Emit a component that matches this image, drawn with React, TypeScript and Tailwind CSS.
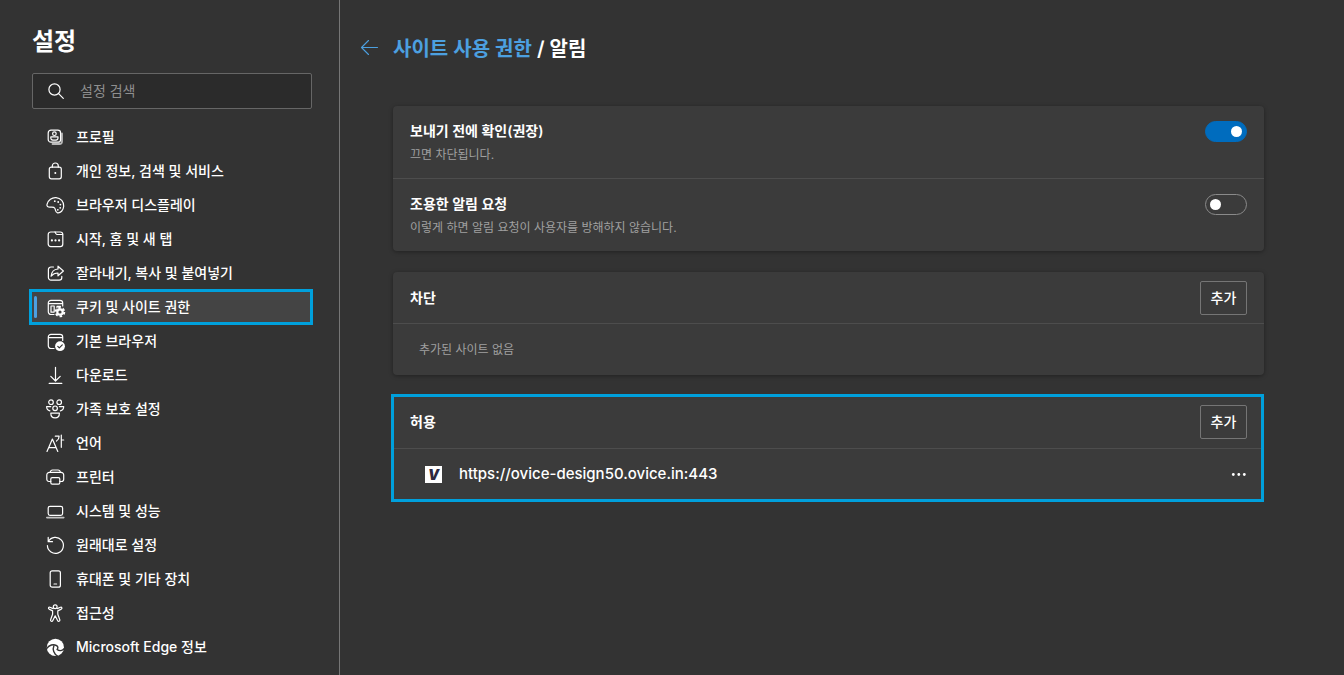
import React, { useState } from 'react';

interface NavItem {
  label: string;
  icon: React.ReactNode;
}

const menu: NavItem[] = [
  {
    label: '프로필',
    icon: (
      <>
        <path d="M17 6.5v8a2.5 2.5 0 0 1-2.5 2.5h-7" strokeWidth="1.8" opacity="0.65" />
        <rect x="3.2" y="3.2" width="12.4" height="12" rx="2.8" />
        <circle cx="9.4" cy="6.7" r="1.8" />
        <path d="M5.8 9.9h7.2v1c0 1.5-1.5 2.3-3.6 2.3s-3.6-.8-3.6-2.3z" />
      </>
    ),
  },
  {
    label: '개인 정보, 검색 및 서비스',
    icon: (
      <>
        <rect x="4.3" y="6.2" width="12" height="11.6" rx="2" />
        <path d="M7.3 6.2V5a3 3 0 0 1 6 0v1.2" />
        <circle cx="10.3" cy="12" r="1" fill="currentColor" stroke="none" />
      </>
    ),
  },
  {
    label: '브라우저 디스플레이',
    icon: (
      <>
        <path d="M2 9.3C3 5 7 2.3 11 2.6c4.8.4 8 4.2 7.7 8.7-.3 4-3.2 7-6.2 6.5-2.5-.5-1.6-2.8-2.7-4.6-.9-1.5-2.6-1.2-4.6-1-2.2.2-3.7-1-3.2-2.9z" />
        <g fill="currentColor" stroke="none">
          <circle cx="9.8" cy="6.2" r="0.9" />
          <circle cx="13.2" cy="7" r="0.9" />
          <circle cx="15.4" cy="9.6" r="0.9" />
          <circle cx="15.2" cy="12.8" r="0.9" />
          <circle cx="12.8" cy="14.8" r="0.9" />
        </g>
      </>
    ),
  },
  {
    label: '시작, 홈 및 새 탭',
    icon: (
      <>
        <rect x="3.2" y="3" width="14.6" height="14.6" rx="2.6" />
        <path d="M10 3l1 1.8c.3.5.6.7 1.2.7h5.4" />
        <g fill="currentColor" stroke="none">
          <circle cx="6.9" cy="11.4" r="1.1" />
          <circle cx="10.5" cy="11.4" r="1.1" />
          <circle cx="14.1" cy="11.4" r="1.1" />
        </g>
      </>
    ),
  },
  {
    label: '잘라내기, 복사 및 붙여넣기',
    icon: (
      <>
        <path d="M8.5 4H6a2.6 2.6 0 0 0-2.6 2.6v8A2.6 2.6 0 0 0 6 17.2h8.2a2.6 2.6 0 0 0 2.6-2.6v-1.2" />
        <path d="M13 3.2L18.4 8 13 12.8V10c-3 0-5 .9-6.9 3.2C6.5 9 8.8 6.3 13 6z" />
      </>
    ),
  },
  {
    label: '쿠키 및 사이트 권한',
    icon: (
      <>
        <path d="M9 17.5H6a2.7 2.7 0 0 1-2.7-2.7V6A2.7 2.7 0 0 1 6 3.3h9A2.7 2.7 0 0 1 17.700 6v3M3.3 6.6h14.4" />
        <path d="M8.8 15.2H6V9h3.2v6M12 9.3h3.500M12 9.300v1.700" />
        <circle cx="15" cy="15" r="2.7" strokeWidth="2.2" />
        <circle cx="15" cy="15" r="4.300" strokeWidth="1.900" strokeLinecap="butt" strokeDasharray="2.500 2.003" />
      </>
    ),
  },
  {
    label: '기본 브라우저',
    icon: (
      <>
        <path d="M9 17.5H6a2.7 2.7 0 0 1-2.7-2.7V6A2.7 2.7 0 0 1 6 3.3h9A2.7 2.7 0 0 1 17.7 6v3.5M3.3 6.6h14.4" />
        <circle cx="15" cy="15.2" r="4.9" fill="currentColor" stroke="none" />
        <path d="M12.8 15.3l1.5 1.5 3-3" className="stroke-[#333333]" />
      </>
    ),
  },
  {
    label: '다운로드',
    icon: <path d="M10.500 2.300v13.500M5.800 11.300l4.700 4.700 4.700-4.700M4.200 18.400h12.600" />,
  },
  {
    label: '가족 보호 설정',
    icon: (
      <>
        <circle cx="6" cy="3.2" r="2.3" />
        <circle cx="14.2" cy="3.2" r="2.3" />
        <circle cx="10.1" cy="9.3" r="2.3" />
        <path d="M5.800 7.600H1.600c0 2.400 1.300 3.900 3.300 4.300M14.400 7.600h4.300c0 2.400-1.300 3.900-3.300 4.300" />
        <path d="M5.800 14.200h8.600c0 3-1.700 4.700-4.300 4.700s-4.300-1.700-4.300-4.700z" />
      </>
    ),
  },
  {
    label: '언어',
    icon: <path d="M2 18.500L7.400 6l5.400 12.500M3.800 14.600h7.200M10.300 3.200h3.800c0 2.200-.9 3.800-2.600 4.900M16.300 2v12.300M16.300 7h2.400" />,
  },
  {
    label: '프린터',
    icon: (
      <>
        <path d="M5.800 14.500H4a2.200 2.200 0 0 1-2.200-2.200V8a2.600 2.600 0 0 1 2.600-2.600h11.700A2.600 2.600 0 0 1 18.700 8v4.300a2.200 2.200 0 0 1-2.200 2.200h-1.700" />
        <path d="M5.300 5.200A2.200 2.200 0 0 1 7.500 3h5.600a2.200 2.200 0 0 1 2.200 2.200" />
        <rect x="5.8" y="10.6" width="9" height="6.6" rx="1.4" />
      </>
    ),
  },
  {
    label: '시스템 및 성능',
    icon: (
      <>
        <rect x="3.2" y="5.3" width="14.4" height="9" rx="1.8" />
        <path d="M1.8 16.6h17" strokeWidth="1.6" opacity="0.7" />
      </>
    ),
  },
  {
    label: '원래대로 설정',
    icon: <path d="M3.200 2.400v4.300h4.300M3.400 6.500A8 8 0 1 1 2.400 10.600" />,
  },
  {
    label: '휴대폰 및 기타 장치',
    icon: (
      <>
        <rect x="5.2" y="1.8" width="10.2" height="16.4" rx="2" />
        <path d="M9 15h2.6" />
      </>
    ),
  },
  {
    label: '접근성',
    icon: (
      <>
        <circle cx="10.2" cy="3.8" r="1.9" />
        <path d="M8.2 5.6L4.900 4.200c-1.300-.4-2 1.200-.8 1.900l3.500 1.800v3.400l-2 5.500c-.4 1.500 1.500 2.100 2.100.9l2.500-4.900 2.500 4.900c.6 1.200 2.500.6 2.100-.9l-2-5.500V7.900l3.500-1.800c1.200-.7.5-2.300-.8-1.900l-3.300 1.400" />
      </>
    ),
  },
  {
    label: 'Microsoft Edge 정보',
    icon: (
      <>
        <circle cx="10.4" cy="10.4" r="8.6" fill="currentColor" stroke="none" />
        <g className="stroke-[#333333]" strokeWidth="1.4">
          <path d="M11.500 8.600C8.500 6.800 4 7.800 1.600 11.600" />
          <path d="M8.900 8.800c-1.600 3.700 0 8.200 3.600 10.200" />
          <path d="M11.600 8.600c1.600.9 1.600 2.600.5 3.800 2.300 1.900 5.400 1.300 7.300-.9" />
        </g>
      </>
    ),
  },
];

const card = 'rounded-[4px] bg-[#3b3b3b] shadow-[0_1px_4px_rgba(0,0,0,0.35)]';

const AddButton: React.FC<{ label: string }> = ({ label }) => (
  <button
    type="button"
    aria-label={label}
    className="h-[34px] w-[47px] rounded-[2px] border border-[#757575] text-sm font-medium text-white"
  >
    추가
  </button>
);

interface ToggleRowProps {
  id: string;
  title: string;
  description: string;
  checked: boolean;
  onChange: (value: boolean) => void;
}

const ToggleRow: React.FC<ToggleRowProps> = ({ id, title, description, checked, onChange }) => (
  <div className="flex items-start justify-between px-[17px] pt-[15px] pb-[13px]">
    <div>
      <label htmlFor={id} className="block text-sm font-semibold text-white">{title}</label>
      <p className="mt-1 text-xs leading-5 text-[#a0a0a0]">{description}</p>
    </div>
    <input
      id={id}
      type="checkbox"
      role="switch"
      checked={checked}
      onChange={(e) => onChange(e.target.checked)}
      className="flex h-[21px] w-[42px] shrink-0 appearance-none items-center rounded-full border border-[#8a8a8a] px-[4px] before:h-[11px] before:w-[11px] before:rounded-full before:bg-white checked:justify-end checked:border-[#006cbe] checked:bg-[#006cbe]"
    />
  </div>
);

const App: React.FC = () => {
  const [active, setActive] = useState('쿠키 및 사이트 권한');
  const [askFirst, setAskFirst] = useState(true);
  const [quiet, setQuiet] = useState(false);

  return (
    <div className="flex min-h-screen bg-[#333333] font-['Inter','Noto_Sans_CJK_KR',sans-serif] text-white">
      <aside className="w-[340px] shrink-0 border-r border-[#767676] pt-6 pr-[27px] pl-[30px]">
        <h1 className="pl-[2px] text-2xl leading-9 font-semibold">설정</h1>
        <div className="mt-[13px] ml-[2px] flex h-9 items-center rounded-[2px] border border-[#666666] bg-[#2b2b2b] pl-[15px]">
          <svg viewBox="0 0 16 16" className="h-4 w-4 shrink-0" fill="none" stroke="currentColor" strokeWidth="1.2" strokeLinecap="round" aria-hidden="true">
            <circle cx="6.5" cy="6.5" r="5.6" />
            <path d="M10.6 10.6l4.7 4.7" />
          </svg>
          <input
            type="search"
            aria-label="설정 검색"
            placeholder="설정 검색"
            className="ml-4 min-w-0 flex-1 bg-transparent text-sm outline-none placeholder:text-[#8f8f8f]"
          />
        </div>
        <nav className="mt-[11px]">
          {menu.map((item) => (
            <a
              key={item.label}
              href="#"
              onClick={() => setActive(item.label)}
              className={
                item.label === active
                  ? 'relative flex h-[34px] items-center gap-[11px] bg-[#444444] pl-[15px] outline-3 -outline-offset-2 outline-[#00a0dc]'
                  : 'relative flex h-[34px] items-center gap-[11px] pl-[15px]'
              }
            >
              {item.label === active && (
                <span className="absolute top-[6px] left-1 h-[22px] w-[3px] rounded-full bg-[#4ca0e0]" />
              )}
              <svg viewBox="0 0 20 20" className="h-5 w-5 shrink-0 overflow-visible" fill="none" stroke="currentColor" strokeWidth="1.2" strokeLinecap="round" strokeLinejoin="round" aria-hidden="true">
                {item.icon}
              </svg>
              <span className="text-sm font-medium">{item.label}</span>
            </a>
          ))}
        </nav>
      </aside>

      <main className="min-w-0 flex-1 pt-[33px] pr-20 pl-5">
        <div className="flex h-8 items-center">
          <a href="#" aria-label="뒤로" className="text-[#4ca0e0]">
            <svg viewBox="0 0 20 20" className="h-5 w-5" fill="none" stroke="currentColor" strokeWidth="1.1" strokeLinecap="round" strokeLinejoin="round" aria-hidden="true">
              <path d="M17.5 8.5h-16M8.500 1.500l-7 7 7 7" />
            </svg>
          </a>
          <h2 className="ml-[13px] text-xl font-semibold">
            <a href="#" className="text-[#4ca0e0]">사이트 사용 권한</a> / 알림
          </h2>
        </div>

        <div className="mt-[41px] ml-[33px] flex flex-col gap-[21px]">
          <section className={card}>
            <ToggleRow id="ask" title="보내기 전에 확인(권장)" description="끄면 차단됩니다." checked={askFirst} onChange={setAskFirst} />
            <div className="border-t border-[#4d4d4d]">
              <ToggleRow id="quiet" title="조용한 알림 요청" description="이렇게 하면 알림 요청이 사용자를 방해하지 않습니다." checked={quiet} onChange={setQuiet} />
            </div>
          </section>

          <section className={card}>
            <div className="flex h-[51px] items-center justify-between px-[17px]">
              <h3 className="text-sm font-semibold">차단</h3>
              <AddButton label="차단 추가" />
            </div>
            <p className="flex h-[52px] items-center border-t border-[#4d4d4d] px-[26px] text-xs text-[#a0a0a0]">추가된 사이트 없음</p>
          </section>

          <section className="mr-[2px] bg-[#3b3b3b] outline-3 -outline-offset-1 outline-[#00a0dc]">
            <div className="flex h-[52px] items-center justify-between pr-[15px] pl-[17px]">
              <h3 className="text-sm font-semibold">허용</h3>
              <AddButton label="허용 추가" />
            </div>
            <div className="flex h-[52px] items-center border-t border-[#4d4d4d] pr-[15px] pl-8">
              <span className="flex h-[17px] w-[17px] items-center justify-center bg-white text-sm leading-4 font-black text-[#2d2840] italic">V</span>
              <span className="ml-[17px] text-[15px] font-medium">https://ovice-design50.ovice.in:443</span>
              <button type="button" aria-label="추가 작업" className="ml-auto">
                <svg viewBox="0 0 16 16" className="h-4 w-4" fill="currentColor" aria-hidden="true">
                  <circle cx="2.3" cy="7.5" r="1.4" />
                  <circle cx="7.8" cy="7.5" r="1.4" />
                  <circle cx="13.3" cy="7.5" r="1.4" />
                </svg>
              </button>
            </div>
          </section>
        </div>
      </main>
    </div>
  );
};

export default App;
